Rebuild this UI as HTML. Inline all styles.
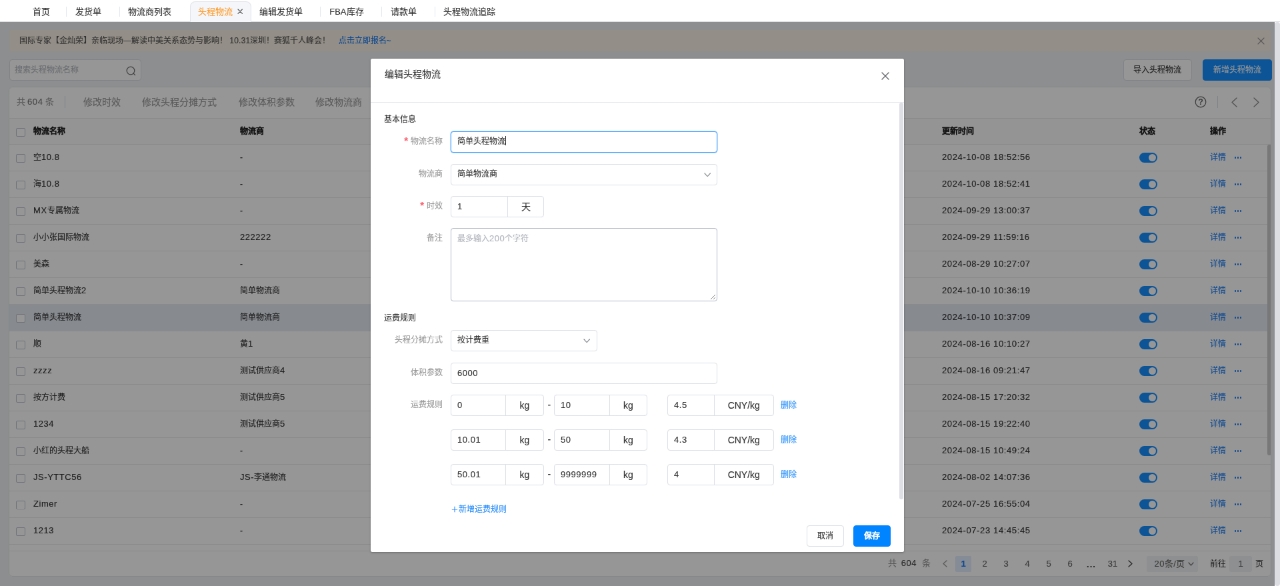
<!DOCTYPE html><html lang="zh-CN"><head><meta charset="utf-8"><title>头程物流</title><style>
*{box-sizing:border-box;margin:0;padding:0}
html,body{width:1280px;height:586px;overflow:hidden;background:#fff}
body{font-family:"Liberation Sans",sans-serif;}
#root{position:absolute;left:0;top:0;width:1920px;height:879px;transform:scale(0.6666667);transform-origin:0 0;font-size:12px;color:#333;overflow:hidden;will-change:transform;-webkit-text-stroke:.12px}
.a{position:absolute}
i{font-style:normal;font-size:13px;letter-spacing:.55px}
.t{position:absolute;white-space:nowrap;line-height:20px;height:20px}
/* tabs */
#tabs{position:absolute;left:0;top:0;width:1920px;height:33px;background:#fff;border-bottom:1px solid #d9dbe0;z-index:50;font-size:13px}
#tabs .t{top:8px;color:#333}
#tabs .sep{position:absolute;top:10px;width:1px;height:15px;background:#e4e7ed}
#atab{position:absolute;left:285px;top:2px;width:92px;height:31px;background:#f5f6fa;border:1px solid #e1e4ea;border-bottom:none;border-radius:8px 8px 0 0}
/* main */
#main{position:absolute;left:0;top:0;width:1912px;height:879px;background:#f0f2f5;overflow:hidden}
#mask{position:absolute;left:0;top:0;width:1912px;height:879px;background:rgba(0,0,0,.41);z-index:10}
#pscroll{position:absolute;left:1912px;top:33px;width:8px;height:846px;background:#dcdde3;border-radius:4px;z-index:60}
#banner{position:absolute;left:13.5px;top:45px;width:1892.5px;height:31.5px;background:#faf1e5;border-radius:2px}
#search{position:absolute;left:13.5px;top:89px;width:198px;height:32px;background:#fff;border:1px solid #dcdfe6;border-radius:4px}
.btn{position:absolute;height:32px;border-radius:4px;font-size:12px;line-height:30px;text-align:center;border:1px solid #dcdfe6;background:#fff;color:#333}
.btn.p{background:#1690ff;border-color:#1690ff;color:#fff}
#card{position:absolute;left:13px;top:130px;width:1893.5px;height:735px;background:#fff;border-radius:6px;overflow:hidden}
.hl{position:absolute;left:0;width:100%;height:1px;background:#ebeef5}
.row{position:absolute;left:0;width:100%;height:40px;border-bottom:1px solid #eaebed;line-height:38px;color:#333}
.row.cur{background:#e5eaf3}
.row .c{position:absolute;top:0;white-space:nowrap}
.cb{position:absolute;left:11px;top:13.5px;width:13.5px;height:13px;border:1px solid #c0c4d0;border-radius:2px;background:#fff}
.sw{position:absolute;left:1695.5px;top:12.3px;width:27px;height:15px;border-radius:8px;background:#1690ff}
.sw:after{content:"";position:absolute;right:2px;top:2px;width:11px;height:11px;border-radius:6px;background:#fff}
.lk{color:#1a7df5}
.dots{position:absolute;left:1838.5px;top:18px;width:12px;height:3px}
.dots b{position:absolute;top:0;width:2.6px;height:2.6px;border-radius:2px;background:#1a7df5}
/* dialog */
#dlg{position:absolute;left:556px;top:88px;width:800px;height:740px;background:#fff;border-radius:2.5px;z-index:20;box-shadow:0 1px 3px rgba(0,0,0,.3)}
#dlg .hd{position:absolute;left:0;top:0;width:800px;height:65.5px;border-bottom:1px solid #e6e8eb}
.lab{position:absolute;left:0;width:108px;text-align:right;color:#999;line-height:31px;height:32px;white-space:nowrap}
.lab s{color:#ff5f6e;text-decoration:none;margin-right:4px;position:relative;top:0px;font-size:15px;line-height:10px;font-weight:bold}
.inp{position:absolute;height:32px;border:1px solid #dcdfe6;border-radius:4px;background:#fff;line-height:29px;padding-left:9px;color:#333;white-space:nowrap;overflow:hidden}
.grp{position:absolute;height:32px;border:1px solid #dcdfe6;border-radius:4px;background:#fff;line-height:29px;color:#333;white-space:nowrap}
.grp .v{position:absolute;left:0;top:0;height:30px;padding-left:9px;border-right:1px solid #dcdfe6}
.grp .u{position:absolute;right:0;top:0;height:30px;line-height:30.5px;text-align:center;font-size:14px}
</style></head><body><div id="root">
<div id="main">
<div id="banner"><span class="t" style="left:15.5px;top:6px;color:#555">国际专家【金灿荣】亲临现场—解读中美关系态势与影响！ <i style="font-size:12px;letter-spacing:.2px">10.31</i>深圳！赛狐千人峰会！</span><span class="t" style="left:494px;top:6px;color:#1a7df5">点击立即报名~</span><svg class="a" style="left:1872.0px;top:11.0px" width="11" height="11" viewBox="-1 -1 11 11"><path d="M0 0 L9 9 M9 0 L0 9" fill="none" stroke="#999" stroke-width="1.1" stroke-linecap="round"/></svg></div>
<div id="search"><span class="t" style="left:7px;top:5px;color:#b4b8bf">搜索头程物流名称</span><svg class="a" style="left:173px;top:8px" width="18" height="18" viewBox="0 0 18 18"><circle cx="8" cy="8" r="5.8" fill="none" stroke="#707070" stroke-width="1.3"/><path d="M12.3 12.3 L14.6 14.6" stroke="#707070" stroke-width="1.3" stroke-linecap="round"/></svg></div>
<div class="btn" style="left:1684.5px;top:89px;width:103px">导入头程物流</div>
<div class="btn p" style="left:1804px;top:89px;width:104px">新增头程物流</div>
<div id="card">
<span class="t" style="left:11.5px;top:12.5px;font-size:13px;color:#999">共<i style="color:#777;margin:0 3px 0 3.5px;letter-spacing:.6px">604</i>条</span>
<div class="a" style="left:84px;top:14px;width:1px;height:18px;background:#dcdfe6"></div>
<span class="t" style="left:111.5px;top:12.5px;font-size:14px;color:#999">修改时效</span>
<span class="t" style="left:200px;top:12.5px;font-size:14px;color:#999">修改头程分摊方式</span>
<span class="t" style="left:344.5px;top:12.5px;font-size:14px;color:#999">修改体积参数</span>
<span class="t" style="left:460px;top:12.5px;font-size:14px;color:#999">修改物流商</span>
<svg class="a" style="left:1779px;top:14px" width="18" height="18" viewBox="0 0 18 18"><circle cx="9" cy="9" r="7.8" fill="none" stroke="#666" stroke-width="1.2"/><text x="9" y="13.3" font-size="12.5" font-weight="bold" text-anchor="middle" fill="#666" font-family="Liberation Sans">?</text></svg>
<div class="a" style="left:1813px;top:14px;width:1px;height:18px;background:#dcdfe6"></div>
<svg class="a" style="left:1834.0px;top:15.8px" width="9" height="15" viewBox="-1 -1 9 15"><path d="M7 0 L0 6.5 L7 13" fill="none" stroke="#8a8a8a" stroke-width="1.25" stroke-linecap="round" stroke-linejoin="round"/></svg>
<svg class="a" style="left:1867.0px;top:15.8px" width="9" height="15" viewBox="-1 -1 9 15"><path d="M0 0 L7 6.5 L0 13" fill="none" stroke="#8a8a8a" stroke-width="1.25" stroke-linecap="round" stroke-linejoin="round"/></svg>
<div class="hl" style="top:47px"></div>
<div class="row" style="top:47px;height:40px;font-weight:bold;color:#222;line-height:38px;background:#fcfcfc;border-top:1px solid #eaebed"><div class="cb"></div><span class="c" style="left:37px">物流名称</span><span class="c" style="left:347px">物流商</span><span class="c" style="left:1400px">更新时间</span><span class="c" style="left:1695.5px">状态</span><span class="c" style="left:1802px">操作</span></div>
<div class="row" style="top:87px"><div class="cb"></div><span class="c" style="left:37px">空<i>10.8</i></span><span class="c" style="left:347px">-</span><span class="c" style="left:1400px"><i style="letter-spacing:.63px">2024-10-08 18:52:56</i></span><div class="sw"></div><span class="c lk" style="left:1802px">详情</span><div class="dots"><b style="left:0"></b><b style="left:4.2px"></b><b style="left:8.4px"></b></div></div>
<div class="row" style="top:127px"><div class="cb"></div><span class="c" style="left:37px">海<i>10.8</i></span><span class="c" style="left:347px">-</span><span class="c" style="left:1400px"><i style="letter-spacing:.63px">2024-10-08 18:52:41</i></span><div class="sw"></div><span class="c lk" style="left:1802px">详情</span><div class="dots"><b style="left:0"></b><b style="left:4.2px"></b><b style="left:8.4px"></b></div></div>
<div class="row" style="top:167px"><div class="cb"></div><span class="c" style="left:37px"><i>MX</i>专属物流</span><span class="c" style="left:347px">-</span><span class="c" style="left:1400px"><i style="letter-spacing:.63px">2024-09-29 13:00:37</i></span><div class="sw"></div><span class="c lk" style="left:1802px">详情</span><div class="dots"><b style="left:0"></b><b style="left:4.2px"></b><b style="left:8.4px"></b></div></div>
<div class="row" style="top:207px"><div class="cb"></div><span class="c" style="left:37px">小小张国际物流</span><span class="c" style="left:347px"><i>222222</i></span><span class="c" style="left:1400px"><i style="letter-spacing:.63px">2024-09-29 11:59:16</i></span><div class="sw"></div><span class="c lk" style="left:1802px">详情</span><div class="dots"><b style="left:0"></b><b style="left:4.2px"></b><b style="left:8.4px"></b></div></div>
<div class="row" style="top:247px"><div class="cb"></div><span class="c" style="left:37px">美森</span><span class="c" style="left:347px">-</span><span class="c" style="left:1400px"><i style="letter-spacing:.63px">2024-08-29 10:27:07</i></span><div class="sw"></div><span class="c lk" style="left:1802px">详情</span><div class="dots"><b style="left:0"></b><b style="left:4.2px"></b><b style="left:8.4px"></b></div></div>
<div class="row" style="top:287px"><div class="cb"></div><span class="c" style="left:37px">简单头程物流<i>2</i></span><span class="c" style="left:347px">简单物流商</span><span class="c" style="left:1400px"><i style="letter-spacing:.63px">2024-10-10 10:36:19</i></span><div class="sw"></div><span class="c lk" style="left:1802px">详情</span><div class="dots"><b style="left:0"></b><b style="left:4.2px"></b><b style="left:8.4px"></b></div></div>
<div class="row cur" style="top:327px"><div class="cb"></div><span class="c" style="left:37px">简单头程物流</span><span class="c" style="left:347px">简单物流商</span><span class="c" style="left:1400px"><i style="letter-spacing:.63px">2024-10-10 10:37:09</i></span><div class="sw"></div><span class="c lk" style="left:1802px">详情</span><div class="dots"><b style="left:0"></b><b style="left:4.2px"></b><b style="left:8.4px"></b></div></div>
<div class="row" style="top:367px"><div class="cb"></div><span class="c" style="left:37px">顺</span><span class="c" style="left:347px">黄<i>1</i></span><span class="c" style="left:1400px"><i style="letter-spacing:.63px">2024-08-16 10:10:27</i></span><div class="sw"></div><span class="c lk" style="left:1802px">详情</span><div class="dots"><b style="left:0"></b><b style="left:4.2px"></b><b style="left:8.4px"></b></div></div>
<div class="row" style="top:407px"><div class="cb"></div><span class="c" style="left:37px"><i>zzzz</i></span><span class="c" style="left:347px">测试供应商<i>4</i></span><span class="c" style="left:1400px"><i style="letter-spacing:.63px">2024-08-16 09:21:47</i></span><div class="sw"></div><span class="c lk" style="left:1802px">详情</span><div class="dots"><b style="left:0"></b><b style="left:4.2px"></b><b style="left:8.4px"></b></div></div>
<div class="row" style="top:447px"><div class="cb"></div><span class="c" style="left:37px">按方计费</span><span class="c" style="left:347px">测试供应商<i>5</i></span><span class="c" style="left:1400px"><i style="letter-spacing:.63px">2024-08-15 17:20:32</i></span><div class="sw"></div><span class="c lk" style="left:1802px">详情</span><div class="dots"><b style="left:0"></b><b style="left:4.2px"></b><b style="left:8.4px"></b></div></div>
<div class="row" style="top:487px"><div class="cb"></div><span class="c" style="left:37px"><i>1234</i></span><span class="c" style="left:347px">测试供应商<i>5</i></span><span class="c" style="left:1400px"><i style="letter-spacing:.63px">2024-08-15 19:22:40</i></span><div class="sw"></div><span class="c lk" style="left:1802px">详情</span><div class="dots"><b style="left:0"></b><b style="left:4.2px"></b><b style="left:8.4px"></b></div></div>
<div class="row" style="top:527px"><div class="cb"></div><span class="c" style="left:37px">小红的头程大船</span><span class="c" style="left:347px">-</span><span class="c" style="left:1400px"><i style="letter-spacing:.63px">2024-08-15 10:49:24</i></span><div class="sw"></div><span class="c lk" style="left:1802px">详情</span><div class="dots"><b style="left:0"></b><b style="left:4.2px"></b><b style="left:8.4px"></b></div></div>
<div class="row" style="top:567px"><div class="cb"></div><span class="c" style="left:37px"><i>JS-YTTC56</i></span><span class="c" style="left:347px"><i>JS-</i>李通物流</span><span class="c" style="left:1400px"><i style="letter-spacing:.63px">2024-08-02 14:07:36</i></span><div class="sw"></div><span class="c lk" style="left:1802px">详情</span><div class="dots"><b style="left:0"></b><b style="left:4.2px"></b><b style="left:8.4px"></b></div></div>
<div class="row" style="top:607px"><div class="cb"></div><span class="c" style="left:37px"><i>Zimer</i></span><span class="c" style="left:347px">-</span><span class="c" style="left:1400px"><i style="letter-spacing:.63px">2024-07-25 16:55:04</i></span><div class="sw"></div><span class="c lk" style="left:1802px">详情</span><div class="dots"><b style="left:0"></b><b style="left:4.2px"></b><b style="left:8.4px"></b></div></div>
<div class="row" style="top:647px"><div class="cb"></div><span class="c" style="left:37px"><i>1213</i></span><span class="c" style="left:347px">-</span><span class="c" style="left:1400px"><i style="letter-spacing:.63px">2024-07-23 14:45:45</i></span><div class="sw"></div><span class="c lk" style="left:1802px">详情</span><div class="dots"><b style="left:0"></b><b style="left:4.2px"></b><b style="left:8.4px"></b></div></div>
<div class="hl" style="top:695.5px"></div>
<div class="a" style="left:0;top:696.5px;width:100%;height:40px;background:#fff"></div>
<div class="a" style="left:1887.5px;top:87px;width:6px;height:466px;background:#cdcdcd;border-radius:3px"></div>
<span class="t" style="left:1318.7px;top:705.0px;font-size:13px;color:#999">共<i style="color:#444;margin:0 7.5px 0 7px;letter-spacing:.6px">604</i>条</span>
<svg class="a" style="left:1401.0px;top:710.0px" width="7" height="11" viewBox="-1 -1 7 11"><path d="M5 0 L0 4.5 L5 9" fill="none" stroke="#999" stroke-width="1.3" stroke-linecap="round" stroke-linejoin="round"/></svg>
<div class="a" style="left:1420px;top:704.0px;width:24px;height:24px;background:#e3effd;border-radius:2px;text-align:center;line-height:24px;font-size:13px;font-weight:bold;color:#1a7df5">1</div>
<div class="a" style="left:1452px;top:704.0px;width:24px;height:24px;text-align:center;line-height:24px;font-size:13px;color:#666">2</div>
<div class="a" style="left:1484px;top:704.0px;width:24px;height:24px;text-align:center;line-height:24px;font-size:13px;color:#666">3</div>
<div class="a" style="left:1516px;top:704.0px;width:24px;height:24px;text-align:center;line-height:24px;font-size:13px;color:#666">4</div>
<div class="a" style="left:1548px;top:704.0px;width:24px;height:24px;text-align:center;line-height:24px;font-size:13px;color:#666">5</div>
<div class="a" style="left:1580px;top:704.0px;width:24px;height:24px;text-align:center;line-height:24px;font-size:13px;color:#666">6</div>
<div class="a" style="left:1644px;top:704.0px;width:24px;height:24px;text-align:center;line-height:24px;font-size:13px;color:#666">31</div>
<div class="a" style="left:1612px;top:705.0px;width:24px;height:24px;text-align:center;line-height:24px;font-size:13px;font-weight:bold;color:#444;letter-spacing:1px">...</div>
<svg class="a" style="left:1679.0px;top:710.0px" width="7" height="11" viewBox="-1 -1 7 11"><path d="M0 0 L5 4.5 L0 9" fill="none" stroke="#444" stroke-width="1.3" stroke-linecap="round" stroke-linejoin="round"/></svg>
<div class="a" style="left:1707px;top:704.0px;width:77px;height:24px;background:#f2f3f5;border-radius:3px"></div>
<span class="t" style="left:1718.5px;top:705.5px;font-size:13px;color:#666"><i style="letter-spacing:.6px">20</i>条<i>/</i>页</span>
<svg class="a" style="left:1768.5px;top:713.0px" width="9" height="6" viewBox="-1 -1 9 6"><path d="M0 0 L3.5 4 L7 0" fill="none" stroke="#777" stroke-width="1.2" stroke-linecap="round" stroke-linejoin="round"/></svg>
<span class="t" style="left:1802px;top:705.5px;font-size:12px;color:#333">前往</span>
<div class="a" style="left:1831px;top:704.0px;width:34px;height:24px;background:#f2f3f5;border-radius:3px;text-align:center;line-height:24px;font-size:13px;color:#666">1</div>
<span class="t" style="left:1869.5px;top:705.5px;font-size:12px;color:#333">页</span>
<div class="a" style="left:0;top:0;width:100%;height:100%;border:1px solid #e2e4e9;border-radius:6px"></div>
</div>
<div id="mask"></div>
<div id="dlg">
<div class="hd"></div>
<span class="t" style="left:20.5px;top:13px;font-size:14px;color:#333">编辑头程物流</span>
<svg class="a" style="left:766.0px;top:20.0px" width="12" height="12" viewBox="-1 -1 12 12"><path d="M0 0 L10 10 M10 0 L0 10" fill="none" stroke="#606266" stroke-width="1.3" stroke-linecap="round"/></svg>
<span class="t" style="left:20px;top:80.7px;color:#333">基本信息</span>
<div class="lab" style="top:109px"><s>*</s>物流名称</div>
<div class="inp" style="left:120px;top:109px;width:400px;border-color:#4aa3fc;box-shadow:0 0 0 .5px #8cc4fd">简单头程物流<span style="display:inline-block;width:1px;height:14px;background:#222;vertical-align:-2px"></span></div>
<div class="lab" style="top:158px">物流商</div>
<div class="inp" style="left:120px;top:158px;width:400px">简单物流商</div><svg class="a" style="left:499.8px;top:170.7px" width="10.4" height="6.6" viewBox="-1 -1 10.4 6.6"><path d="M0 0 L4.2 4.6 L8.4 0" fill="none" stroke="#8f9298" stroke-width="1.2" stroke-linecap="round" stroke-linejoin="round"/></svg>
<div class="lab" style="top:206px"><s>*</s>时效</div>
<div class="grp" style="left:120px;top:206px;width:140px"><div class="v" style="width:85px"><i>1</i></div><div class="u" style="width:53px">天</div></div>
<div class="lab" style="top:254px">备注</div>
<div class="inp" style="left:120px;top:254px;width:400px;height:110px;border-color:#b3bac5;color:#b0b4bb">最多输入<i style="letter-spacing:.5px">200</i>个字符<svg class="a" style="right:1px;bottom:1px" width="10" height="10" viewBox="0 0 10 10"><path d="M9 2 L2 9 M9 6 L6 9" stroke="#8a8a8a" stroke-width="1"/></svg></div>
<span class="t" style="left:20px;top:379px;color:#333">运费规则</span>
<div class="lab" style="top:407px">头程分摊方式</div>
<div class="inp" style="left:120px;top:407px;width:220px">按计费重</div><svg class="a" style="left:319.3px;top:419.7px" width="10.4" height="6.6" viewBox="-1 -1 10.4 6.6"><path d="M0 0 L4.2 4.6 L8.4 0" fill="none" stroke="#8f9298" stroke-width="1.2" stroke-linecap="round" stroke-linejoin="round"/></svg>
<div class="lab" style="top:455.5px">体积参数</div>
<div class="inp" style="left:120px;top:455.5px;width:400px"><i>6000</i></div>
<div class="lab" style="top:504px">运费规则</div>
<div class="grp" style="left:120px;top:504px;width:140px"><div class="v" style="width:82px"><i>0</i></div><div class="u" style="width:56px">kg</div></div>
<span class="t" style="left:265.5px;top:509px;color:#333;font-size:14px">-</span>
<div class="grp" style="left:275px;top:504px;width:140px"><div class="v" style="width:83px"><i>10</i></div><div class="u" style="width:55px">kg</div></div>
<div class="grp" style="left:445px;top:504px;width:159.5px"><div class="v" style="width:70px"><i>4.5</i></div><div class="u" style="width:87.5px">CNY/kg</div></div>
<span class="t" style="left:615px;top:510px;color:#2a90fa">删除</span>
<div class="grp" style="left:120px;top:556px;width:140px"><div class="v" style="width:82px"><i>10.01</i></div><div class="u" style="width:56px">kg</div></div>
<span class="t" style="left:265.5px;top:561px;color:#333;font-size:14px">-</span>
<div class="grp" style="left:275px;top:556px;width:140px"><div class="v" style="width:83px"><i>50</i></div><div class="u" style="width:55px">kg</div></div>
<div class="grp" style="left:445px;top:556px;width:159.5px"><div class="v" style="width:70px"><i>4.3</i></div><div class="u" style="width:87.5px">CNY/kg</div></div>
<span class="t" style="left:615px;top:562px;color:#2a90fa">删除</span>
<div class="grp" style="left:120px;top:608px;width:140px"><div class="v" style="width:82px"><i>50.01</i></div><div class="u" style="width:56px">kg</div></div>
<span class="t" style="left:265.5px;top:613px;color:#333;font-size:14px">-</span>
<div class="grp" style="left:275px;top:608px;width:140px"><div class="v" style="width:83px"><i>9999999</i></div><div class="u" style="width:55px">kg</div></div>
<div class="grp" style="left:445px;top:608px;width:159.5px"><div class="v" style="width:70px"><i>4</i></div><div class="u" style="width:87.5px">CNY/kg</div></div>
<span class="t" style="left:615px;top:614px;color:#2a90fa">删除</span>
<svg class="a" style="left:121px;top:671px" width="10" height="10" viewBox="0 0 10 10"><path d="M5 .8 V9.2 M.8 5 H9.2" stroke="#2b8ffb" stroke-width="1.1" fill="none"/></svg>
<span class="t" style="left:131.7px;top:666px;color:#2b8ffb">新增运费规则</span>
<div class="a" style="left:792.5px;top:66px;width:6px;height:595px;background:#dddfe5;border-radius:3px"></div>
<div class="btn" style="left:654px;top:700px;width:56px">取消</div>
<div class="btn p" style="left:724px;top:700px;width:56px;background:#0084ff;border-color:#0084ff;font-weight:bold">保存</div>
</div>
</div>
<div id="tabs"><div id="atab"></div>
<span class="t" style="left:48.75px;color:#333">首页</span>
<span class="t" style="left:112.5px;color:#333">发货单</span>
<span class="t" style="left:192px;color:#333">物流商列表</span>
<span class="t" style="left:297px;color:#ff9c2b">头程物流</span>
<span class="t" style="left:389.25px;color:#333">编辑发货单</span>
<span class="t" style="left:494.25px;color:#333"><i style='letter-spacing:0'>FBA</i>库存</span>
<span class="t" style="left:586px;color:#333">请款单</span>
<span class="t" style="left:665.25px;color:#333">头程物流追踪</span>
<div class="sep" style="left:99px"></div>
<div class="sep" style="left:179px"></div>
<div class="sep" style="left:480px"></div>
<div class="sep" style="left:571.5px"></div>
<div class="sep" style="left:652px"></div>
<svg class="a" style="left:356.1px;top:13.100000000000001px" width="8.4" height="8.4" viewBox="-1 -1 8.4 8.4"><path d="M0 0 L6.4 6.4 M6.4 0 L0 6.4" fill="none" stroke="#555" stroke-width="1.15" stroke-linecap="round"/></svg>
</div>
<div id="pscroll"></div>
</div></body></html>
